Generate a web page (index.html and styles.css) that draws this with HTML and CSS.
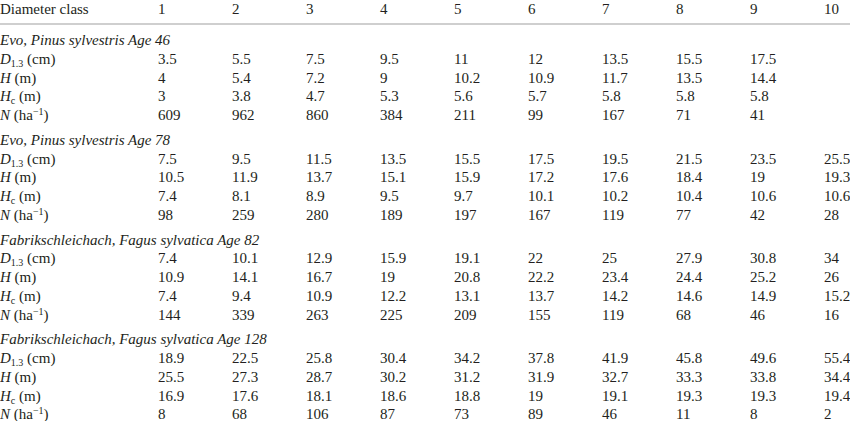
FILE: index.html
```html
<!DOCTYPE html>
<html>
<head>
<meta charset="utf-8">
<link rel="stylesheet" href="styles.css">
</head>
<body>
<div class="tbl">
  <div class="row head">
    <div>Diameter class</div><div>1</div><div>2</div><div>3</div><div>4</div><div>5</div><div>6</div><div>7</div><div>8</div><div>9</div><div>10</div>
  </div>

  <div class="section">
    <div class="title">Evo, Pinus sylvestris Age 46</div>
    <div class="row"><div><i>D</i><sub>1.3</sub> (cm)</div><div>3.5</div><div>5.5</div><div>7.5</div><div>9.5</div><div>11</div><div>12</div><div>13.5</div><div>15.5</div><div>17.5</div><div></div></div>
    <div class="row"><div><i>H</i> (m)</div><div>4</div><div>5.4</div><div>7.2</div><div>9</div><div>10.2</div><div>10.9</div><div>11.7</div><div>13.5</div><div>14.4</div><div></div></div>
    <div class="row"><div><i>H</i><sub>c</sub> (m)</div><div>3</div><div>3.8</div><div>4.7</div><div>5.3</div><div>5.6</div><div>5.7</div><div>5.8</div><div>5.8</div><div>5.8</div><div></div></div>
    <div class="row"><div><i>N</i> (ha<sup>−1</sup>)</div><div>609</div><div>962</div><div>860</div><div>384</div><div>211</div><div>99</div><div>167</div><div>71</div><div>41</div><div></div></div>
  </div>

  <div class="section">
    <div class="title">Evo, Pinus sylvestris Age 78</div>
    <div class="row"><div><i>D</i><sub>1.3</sub> (cm)</div><div>7.5</div><div>9.5</div><div>11.5</div><div>13.5</div><div>15.5</div><div>17.5</div><div>19.5</div><div>21.5</div><div>23.5</div><div>25.5</div></div>
    <div class="row"><div><i>H</i> (m)</div><div>10.5</div><div>11.9</div><div>13.7</div><div>15.1</div><div>15.9</div><div>17.2</div><div>17.6</div><div>18.4</div><div>19</div><div>19.3</div></div>
    <div class="row"><div><i>H</i><sub>c</sub> (m)</div><div>7.4</div><div>8.1</div><div>8.9</div><div>9.5</div><div>9.7</div><div>10.1</div><div>10.2</div><div>10.4</div><div>10.6</div><div>10.6</div></div>
    <div class="row"><div><i>N</i> (ha<sup>−1</sup>)</div><div>98</div><div>259</div><div>280</div><div>189</div><div>197</div><div>167</div><div>119</div><div>77</div><div>42</div><div>28</div></div>
  </div>

  <div class="section">
    <div class="title">Fabrikschleichach, Fagus sylvatica Age 82</div>
    <div class="row"><div><i>D</i><sub>1.3</sub> (cm)</div><div>7.4</div><div>10.1</div><div>12.9</div><div>15.9</div><div>19.1</div><div>22</div><div>25</div><div>27.9</div><div>30.8</div><div>34</div></div>
    <div class="row"><div><i>H</i> (m)</div><div>10.9</div><div>14.1</div><div>16.7</div><div>19</div><div>20.8</div><div>22.2</div><div>23.4</div><div>24.4</div><div>25.2</div><div>26</div></div>
    <div class="row"><div><i>H</i><sub>c</sub> (m)</div><div>7.4</div><div>9.4</div><div>10.9</div><div>12.2</div><div>13.1</div><div>13.7</div><div>14.2</div><div>14.6</div><div>14.9</div><div>15.2</div></div>
    <div class="row"><div><i>N</i> (ha<sup>−1</sup>)</div><div>144</div><div>339</div><div>263</div><div>225</div><div>209</div><div>155</div><div>119</div><div>68</div><div>46</div><div>16</div></div>
  </div>

  <div class="section">
    <div class="title">Fabrikschleichach, Fagus sylvatica Age 128</div>
    <div class="row"><div><i>D</i><sub>1.3</sub> (cm)</div><div>18.9</div><div>22.5</div><div>25.8</div><div>30.4</div><div>34.2</div><div>37.8</div><div>41.9</div><div>45.8</div><div>49.6</div><div>55.4</div></div>
    <div class="row"><div><i>H</i> (m)</div><div>25.5</div><div>27.3</div><div>28.7</div><div>30.2</div><div>31.2</div><div>31.9</div><div>32.7</div><div>33.3</div><div>33.8</div><div>34.4</div></div>
    <div class="row"><div><i>H</i><sub>c</sub> (m)</div><div>16.9</div><div>17.6</div><div>18.1</div><div>18.6</div><div>18.8</div><div>19</div><div>19.1</div><div>19.3</div><div>19.3</div><div>19.4</div></div>
    <div class="row"><div><i>N</i> (ha<sup>−1</sup>)</div><div>8</div><div>68</div><div>106</div><div>87</div><div>73</div><div>89</div><div>46</div><div>11</div><div>8</div><div>2</div></div>
  </div>
</div>
</body>
</html>
```
FILE: styles.css
```css
html, body {
  margin: 0;
  padding: 0;
  background: #fff;
}
body {
  width: 850px;
  height: 421px;
  overflow: hidden;
  font-family: "Liberation Serif", "Times New Roman", serif;
  font-size: 15px;
  color: #231f20;
}
.tbl {
  display: flex;
  flex-direction: column;
}
.row {
  display: grid;
  grid-template-columns: 158px repeat(9, 74px) 1fr;
  height: 18.75px;
  line-height: 18.75px;
  white-space: nowrap;
}
.head {
  height: 19px;
  line-height: 19px;
  padding-bottom: 4px;
  border-bottom: 2px solid #cfcfcf;
}
.section {
  display: flex;
  flex-direction: column;
  padding-top: 6px;
}
.section:first-of-type {
  padding-top: 4px;
}
.title {
  height: 18.75px;
  line-height: 18.75px;
  font-style: italic;
  white-space: nowrap;
}
sub, sup {
  font-size: 10px;
  line-height: 0;
  position: relative;
  vertical-align: baseline;
}
sub {
  top: 3px;
}
sup {
  top: -5px;
}
```
